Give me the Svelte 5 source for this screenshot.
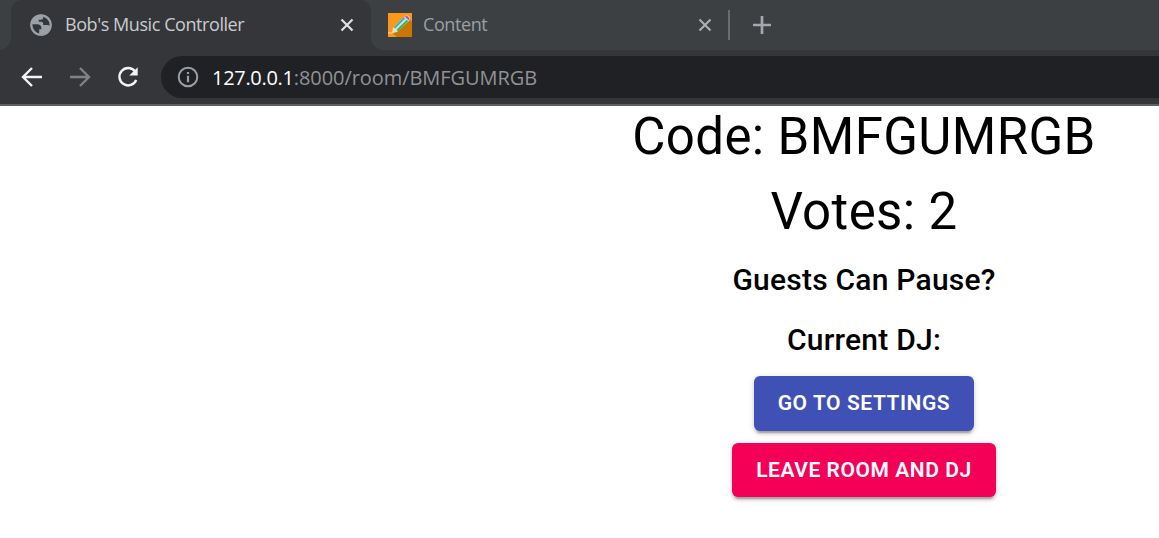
<script>
  const host = '127.0.0.1';
  const path = ':8000/room/BMFGUMRGB';
  const code = 'BMFGUMRGB';
  const votes = 2;
</script>

<div class="window">
  <header>
    <div class="tabs">
      <div class="tab active">
        <svg class="globe" width="24" height="24" viewBox="0 0 24 24">
          <circle cx="12" cy="12" r="10.5" fill="#9aa0a6" />
          <path d="M2.800 11.200h5.400c2.400 0 4.200 1.500 4.200 4v1h-2.200v4.800C6 20.500 2.800 16.500 2.800 11.200Z" fill="#35363a" />
          <path d="M14.200 3v1.500c0 1.300-1 2.200-2.300 2.200H9.800v2h2.400c1.200 0 2 .9 2 2v1.400h4.400c1 0 1.700.6 2.500 1.200C22 9 19 4 14.200 3Z" fill="#35363a" />
          <circle cx="12" cy="12" r="9.700" fill="none" stroke="#9aa0a6" stroke-width="2.200" />
        </svg>
        <span class="title first">Bob's Music Controller</span>
        <svg class="close" width="14" height="14" viewBox="0 0 14 14"><path d="M1.500 1.500l11 11m0-11-11 11" stroke="#dfe1e5" stroke-width="2.200" /></svg>
      </div>
      <div class="tab idle">
        <svg class="pencil" width="24" height="24" viewBox="0 0 24 24">
          <path d="M0 0h24v24H0z" fill="#f9981a" />
          <path d="M21.500 6 24 8.500V24H9l-5-4.500Z" fill="#c97700" />
          <path d="M3.800 20.200 5 15.200 17 3.200q2.300-1.500 4.100.3t.3 4.100L9 19Z" fill="#e8dccb" />
          <path d="M6.600 14.800 16.600 4.800" stroke="#22b8e6" stroke-width="1.900" />
          <path d="m9.300 17.500 10.200-10.200" stroke="#25b95a" stroke-width="1.900" />
          <path d="M16.700 3.600q2.100-1.400 3.800.3t.4 3.700Z" fill="#a755c9" />
          <path d="M0 20h4.500" stroke="#ffd69d" />
        </svg>
        <span class="title second">Content</span>
        <svg class="close" width="14" height="14" viewBox="0 0 14 14"><path d="M1.500 1.500l11 11m0-11-11 11" stroke="#aeb1b4" stroke-width="2" /></svg>
      </div>
      <i class="divider"></i>
      <svg class="plus" width="20" height="20" viewBox="0 0 20 20"><path d="M10 1v18M1 10h18" stroke="#a5a9ad" stroke-width="2.700" /></svg>
    </div>
    <div class="toolbar">
      <svg class="back" width="22" height="22" viewBox="0 0 22 22" fill="none" stroke="#f1f3f4" stroke-width="2.400"><path d="M21 11H2.500M11 2 2 11l9 9" /></svg>
      <svg class="forward" width="22" height="22" viewBox="0 0 22 22" fill="none" stroke="#818286" stroke-width="2.400"><path d="M1 11h18.500M11 2l9 9-9 9" /></svg>
      <svg class="reload" width="24" height="24" viewBox="0 0 24 24">
        <path d="M18.900 6.200A8.700 8.700 0 1 0 20.200 15" fill="none" stroke="#f1f3f4" stroke-width="2.400" />
        <path d="M21.700 2.200v8.400h-8.400Z" fill="#f1f3f4" />
      </svg>
      <div class="address">
        <svg width="22" height="22" viewBox="0 0 22 22"><circle cx="11" cy="11" r="9.300" fill="none" stroke="#9aa0a6" stroke-width="2" /><path d="M9.900 6h2.200v2H9.900zM9.900 9.800h2.200v6.400H9.900z" fill="#9aa0a6" /></svg>
        <span class="url"><b>{host}</b>{path}</span>
      </div>
    </div>
  </header>

  <main>
    <div class="room">
      <h4>Code: {code}</h4>
      <h4>Votes: {votes}</h4>
      <h6>Guests Can Pause?</h6>
      <h6>Current DJ:</h6>
      <button class="primary">Go to settings</button>
      <button class="secondary">Leave room and DJ</button>
    </div>
  </main>
</div>

<style>
  .window {
    height: 538px;
    overflow: hidden;
    background: #fff;
    font-family: Roboto, sans-serif;
  }
  header {
    height: 106px;
    box-sizing: border-box;
    border-bottom: 2px solid #5f6064;
    background: #35363a;
    font-family: "Open Sans", sans-serif;
  }
  svg { display: block; flex: none; }
  .tabs {
    display: flex;
    align-items: center;
    height: 50px;
    padding-left: 11px;
    background: #3c4043;
  }
  .tab {
    display: flex;
    align-items: center;
    height: 50px;
    box-sizing: border-box;
    position: relative;
  }
  .active {
    width: 360px;
    padding: 0 17px 0 18px;
    border-radius: 11px 11px 0 0;
    background: #35363a;
  }
  .active::before, .active::after {
    content: "";
    position: absolute;
    bottom: 0;
    width: 12px;
    height: 12px;
  }
  .active::before {
    left: -12px;
    background: radial-gradient(circle at 0 0, transparent 11.5px, #35363a 12px);
  }
  .active::after {
    right: -12px;
    background: radial-gradient(circle at 12px 0, transparent 11.5px, #35363a 12px);
  }
  .idle { width: 357px; padding: 0 16px 0 17px; }
  .title { white-space: nowrap; font-size: 18px; line-height: 24px; padding-bottom: 2px; }
  .first { margin-left: 12px; color: #c9cbce; letter-spacing: -0.43px; }
  .second { margin-left: 11px; color: #9b9fa2; letter-spacing: -0.4px; }
  .close { margin-left: auto; }
  .divider { width: 2px; height: 30px; background: #696d70; }
  .plus { margin-left: 22px; }
  .toolbar { display: flex; align-items: center; height: 54px; padding-left: 21px; }
  .forward { margin-left: 26px; }
  .reload { margin-left: 25px; }
  .address {
    display: flex;
    align-items: center;
    flex: 1;
    height: 42px;
    margin-left: 21px;
    padding-left: 16px;
    border-radius: 21px 0 0 21px;
    background: #202124;
  }
  .url {
    margin-left: 13px;
    padding-top: 1px;
    color: #909295;
    font-size: 20px;
    line-height: 28px;
    letter-spacing: -0.06px;
    white-space: nowrap;
  }
  .url b { color: #fff; font-weight: 400; letter-spacing: -0.3px; }
  main { height: 432px; overflow: hidden; }
  .room {
    display: flex;
    flex-direction: column;
    align-items: center;
    gap: 12px;
    width: 1728px;
    color: #000;
  }
  h4, h6 { margin: 0; white-space: nowrap; }
  h4 { font-size: 51px; font-weight: 400; line-height: 1.235; letter-spacing: 0.00735em; }
  h6 { font-size: 30px; font-weight: 500; line-height: 1.6; letter-spacing: 0.0075em; }
  button {
    border: 0;
    border-radius: 6px;
    padding: 9px 24px;
    color: #fff;
    font: 600 21px/1.75 Roboto, sans-serif;
    letter-spacing: 0.0265em;
    text-transform: uppercase;
    box-shadow: 0 4.5px 1.5px -3px rgba(0,0,0,.2), 0 3px 3px rgba(0,0,0,.14), 0 1.5px 7.5px rgba(0,0,0,.12);
  }
  .primary { background: #3f51b5; }
  .secondary { background: #f50057; }
</style>
